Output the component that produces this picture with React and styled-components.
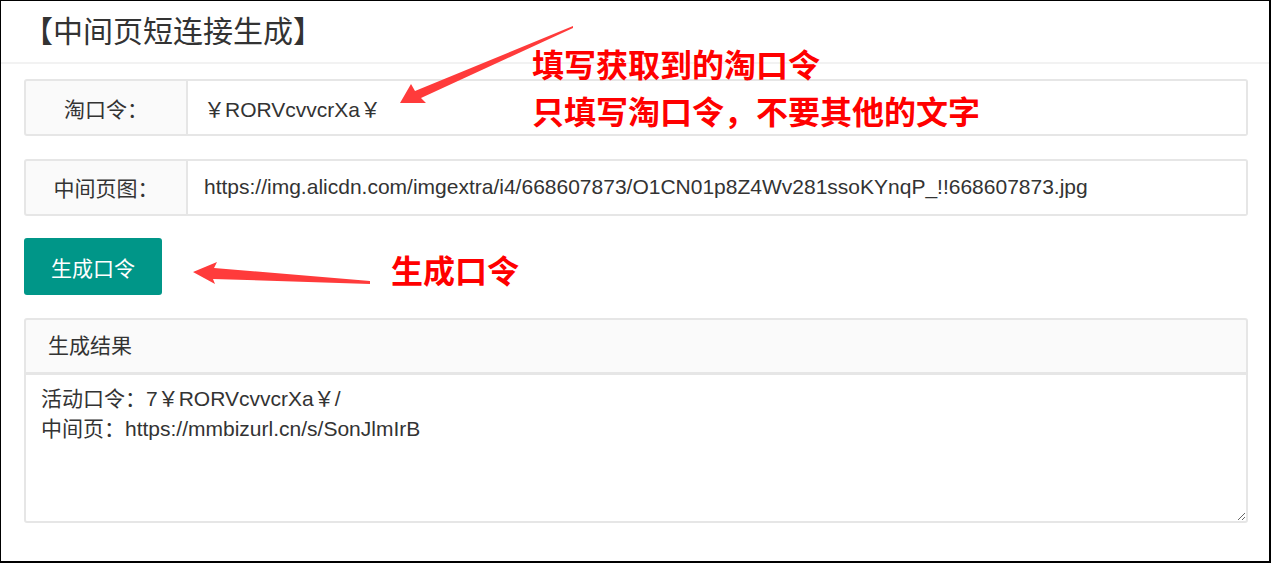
import React from 'react'
import styled, { createGlobalStyle } from 'styled-components'

const GlobalStyle = createGlobalStyle`
  html, body {
    margin: 0;
    padding: 0;
    background: #fff;
  }
  body {
    font-family: 'Liberation Sans', 'Noto Sans CJK SC', sans-serif;
    color: #333;
  }
`

const Frame = styled.div`
  position: relative;
  width: 1271px;
  height: 563px;
  box-sizing: border-box;
  border-style: solid;
  border-color: #000;
  border-width: 1px 2px 2px 1px;
  background: #fff;
  overflow: hidden;
`

const Header = styled.div`
  height: 61px;
  line-height: 61px;
  padding-left: 22px;
  border-bottom: 2px solid #f2f2f2;
  font-size: 30px;
  color: #333;
`

const Body = styled.div`
  display: flex;
  flex-direction: column;
  gap: 22.5px;
  padding: 15px 21px 0 23px;
`

const FormRow = styled.div`
  display: flex;
  height: 57px;
`

const Label = styled.div`
  width: 164px;
  flex-shrink: 0;
  box-sizing: border-box;
  display: flex;
  align-items: center;
  justify-content: center;
  border: 2px solid #e6e6e6;
  border-radius: 3px 0 0 3px;
  background: #fafafa;
  font-size: 21px;
  color: #333;
`

const Input = styled.input`
  flex: 1;
  min-width: 0;
  box-sizing: border-box;
  height: 57px;
  padding: 0 16px;
  border: 2px solid #e6e6e6;
  border-left: none;
  border-radius: 0 3px 3px 0;
  background: #fff;
  font-family: inherit;
  font-size: 21px;
  color: #333;
  outline: none;
`

const Button = styled.button`
  align-self: flex-start;
  height: 57px;
  padding: 0 27px;
  border: none;
  border-radius: 3px;
  background: #009688;
  color: #fff;
  font-family: inherit;
  font-size: 21px;
  cursor: pointer;
`

const ResultPanel = styled.div`
  display: flex;
  flex-direction: column;
`

const ResultHeader = styled.div`
  height: 52px;
  line-height: 52px;
  padding: 0 22px;
  border: 2px solid #e6e6e6;
  border-bottom-width: 1px;
  border-radius: 3px 3px 0 0;
  background: #fafafa;
  font-size: 21px;
  color: #333;
`

const ResultText = styled.textarea`
  display: block;
  width: 100%;
  height: 150px;
  box-sizing: border-box;
  padding: 9px 15px;
  border: 2px solid #e6e6e6;
  border-radius: 0 0 3px 3px;
  background: #fff;
  font-family: inherit;
  font-size: 21px;
  line-height: 30px;
  color: #333;
  outline: none;
`

// red hand-drawn callouts lying over the form
const Arrows = styled.svg`
  position: absolute;
  top: -1px;
  left: -1px;
  pointer-events: none;
`

const Callout = styled.div`
  position: absolute;
  left: ${(props) => props.$x}px;
  top: ${(props) => props.$y}px;
  font-family: 'Noto Sans CJK SC', sans-serif;
  font-weight: 700;
  font-size: 32px;
  line-height: 47px;
  color: #ff0000;
  white-space: nowrap;
`

export default function App() {
  return (
    <>
      <GlobalStyle />
      <Frame>
        <Header>【中间页短连接生成】</Header>
        <Body>
          <FormRow>
            <Label>淘口令：</Label>
            <Input defaultValue="￥RORVcvvcrXa￥" />
          </FormRow>
          <FormRow>
            <Label>中间页图：</Label>
            <Input defaultValue="https://img.alicdn.com/imgextra/i4/668607873/O1CN01p8Z4Wv281ssoKYnqP_!!668607873.jpg" />
          </FormRow>
          <Button>生成口令</Button>
          <ResultPanel>
            <ResultHeader>生成结果</ResultHeader>
            <ResultText
              defaultValue={'活动口令：7￥RORVcvvcrXa￥/\n中间页：https://mmbizurl.cn/s/SonJlmIrB'}
            />
          </ResultPanel>
        </Body>

        <Arrows width="1271" height="563">
          <polygon
            fill="#ff3b3b"
            points="573,26 415,91 411,84 400,103 426,103 421,98 573,28"
          />
          <polygon
            fill="#ff3b3b"
            points="193,272 217,262 214,268 370,281 370,284 213,279 215,284"
          />
        </Arrows>
        <Callout $x={531} $y={39}>
          填写获取到的淘口令
          <br />
          只填写淘口令，不要其他的文字
        </Callout>
        <Callout $x={390} $y={245}>
          生成口令
        </Callout>
      </Frame>
    </>
  )
}
